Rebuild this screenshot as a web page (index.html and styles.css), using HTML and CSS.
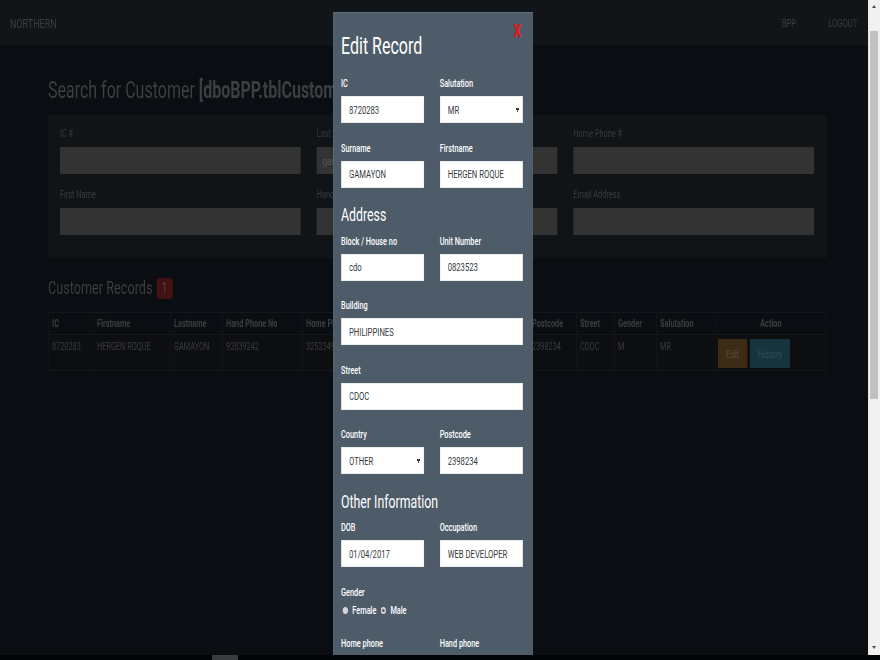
FILE: index.html
```html
<!DOCTYPE html>
<html lang="en">
<head>
<meta charset="utf-8">
<title>Northern - Customers</title>
<link rel="stylesheet" href="styles.css">
</head>
<body>
<div class="screen">
  <div class="page">
    <nav class="navbar">
      <span class="brand">NORTHERN</span>
      <ul class="nav-links">
        <li>BPP</li>
        <li>LOGOUT</li>
      </ul>
    </nav>

    <main class="container">
      <h1 class="page-title">Search for Customer <b>[dboBPP.tblCustomer]</b></h1>

      <section class="search-panel">
        <div class="sfield"><label>IC #</label><input class="sinput" type="text"></div>
        <div class="sfield"><label>Last Name</label><input class="sinput" type="text" value="gamayon"></div>
        <div class="sfield"><label>Home Phone #</label><input class="sinput" type="text"></div>
        <div class="sfield"><label>First Name</label><input class="sinput" type="text"></div>
        <div class="sfield"><label>Hand Phone #</label><input class="sinput" type="text"></div>
        <div class="sfield"><label>Email Address</label><input class="sinput" type="text"></div>
      </section>

      <h2 class="records-title">Customer Records <span class="badge">1</span></h2>

      <table class="records">
        <colgroup>
          <col class="c-ic"><col class="c-first"><col class="c-last"><col class="c-hand">
          <col class="c-home"><col class="c-block"><col class="c-unit"><col class="c-post">
          <col class="c-street"><col class="c-gender"><col class="c-sal"><col class="c-action">
        </colgroup>
        <thead>
          <tr>
            <th>IC</th><th>Firstname</th><th>Lastname</th><th>Hand Phone No</th>
            <th>Home Phone No</th><th>Block</th><th>Unit Number</th><th>Postcode</th>
            <th>Street</th><th>Gender</th><th>Salutation</th><th class="center">Action</th>
          </tr>
        </thead>
        <tbody>
          <tr>
            <td>8720283</td><td>HERGEN ROQUE</td><td>GAMAYON</td><td>92839242</td>
            <td>32523498</td><td>cdo</td><td>0823523</td><td>2398234</td>
            <td>CDOC</td><td>M</td><td>MR</td>
            <td class="action"><button class="btn btn-edit">Edit</button><button class="btn btn-history">History</button></td>
          </tr>
        </tbody>
      </table>
    </main>
  </div>

  <div class="backdrop">
    <div class="modal">
      <button class="close">X</button>
      <h3 class="modal-title">Edit Record</h3>

      <div class="row">
        <div class="field"><label>IC</label><input type="text" value="8720283"></div>
        <div class="field"><label>Salutation</label><select><option>MR</option><option>MS</option></select></div>
      </div>
      <div class="row">
        <div class="field"><label>Surname</label><input type="text" value="GAMAYON"></div>
        <div class="field"><label>Firstname</label><input type="text" value="HERGEN ROQUE"></div>
      </div>

      <h4 class="section">Address</h4>
      <div class="row">
        <div class="field"><label>Block / House no</label><input type="text" value="cdo"></div>
        <div class="field"><label>Unit Number</label><input type="text" value="0823523"></div>
      </div>
      <div class="field"><label>Building</label><input type="text" value="PHILIPPINES"></div>
      <div class="field"><label>Street</label><input type="text" value="CDOC"></div>
      <div class="row">
        <div class="field"><label>Country</label><select><option>OTHER</option></select></div>
        <div class="field"><label>Postcode</label><input type="text" value="2398234"></div>
      </div>

      <h4 class="section">Other Information</h4>
      <div class="row">
        <div class="field"><label>DOB</label><input type="text" value="01/04/2017"></div>
        <div class="field"><label>Occupation</label><input type="text" value="WEB DEVELOPER"></div>
      </div>

      <div class="gender">
        <span class="glabel">Gender</span>
        <div class="radios">
          <input class="radio" type="radio" name="g"><span>Female</span>
          <input class="radio" type="radio" name="g" checked><span>Male</span>
        </div>
      </div>

      <div class="row">
        <div class="field"><label>Home phone</label><input type="text" value="32523498"></div>
        <div class="field"><label>Hand phone</label><input type="text" value="92839242"></div>
      </div>
      <div class="field"><label>Email</label><input type="text" value=""></div>
    </div>
  </div>

  <div class="vscroll">
    <span class="arrow arrow-up"></span>
    <div class="vtrack"><span class="vthumb"></span></div>
    <span class="arrow arrow-down"></span>
  </div>
  <div class="hscroll"><span class="hthumb"></span></div>
</div>
</body>
</html>
```

FILE: styles.css
```css
* { box-sizing: border-box; }

html, body {
  margin: 0;
  height: 100%;
  overflow: hidden;
  background: #0a0d11;
}

body {
  color: #3a3d41;
  font-family: Roboto, "Liberation Sans", Arial, sans-serif;
  font-size: 11px;
}

/* The captured window was 1320px wide, shown squeezed to 880px. */
.screen {
  position: relative;
  width: 1320px;
  height: 660px;
  overflow: hidden;
  transform: scaleX(0.6667);
  transform-origin: 0 0;
}

.page { width: 1302px; }

/* ---------- navbar ---------- */
.navbar {
  height: 46px;
  background: #121518;
  display: flex;
  align-items: center;
  justify-content: space-between;
  padding: 0 16px 0 15px;
}
.brand { font-size: 13.5px; color: #3a3d40; }
.nav-links {
  display: flex;
  gap: 48px;
  list-style: none;
  margin: 0;
  padding: 0;
  font-size: 11.5px;
  color: #3a3d40;
}

/* ---------- page ---------- */
.container {
  width: 1168px;
  margin-left: 72px;
}
.page-title {
  margin: 31px 0 12px;
  font-size: 24px;
  line-height: 26px;
  font-weight: 400;
  color: #3b3e42;
  white-space: nowrap;
}
.page-title b { font-weight: 700; }

.search-panel {
  background: #111417;
  padding: 12px 19px 9px 18px;
  display: grid;
  grid-template-columns: repeat(3, 1fr);
  column-gap: 24px;
}
.sfield { margin-bottom: 14px; }
.sfield label {
  display: block;
  line-height: 14px;
  margin-bottom: 6px;
  font-size: 11px;
  color: #393c3f;
}
.sinput {
  display: block;
  width: 100%;
  height: 27px;
  border: 0;
  background: #333333;
  color: #58585a;
  font: inherit;
  font-size: 11.5px;
  padding: 0 9px;
}

.records-title {
  margin: 19px 0 13px;
  font-size: 19px;
  line-height: 22px;
  font-weight: 400;
  color: #3a3d41;
  display: flex;
  align-items: center;
  gap: 6px;
}
.badge {
  display: inline-block;
  width: 24px;
  height: 21px;
  line-height: 21px;
  text-align: center;
  background: #3f1314;
  color: #6b3a3b;
  font-size: 15px;
  border-radius: 3px;
}

.records {
  width: 1167px;
  table-layout: fixed;
  border-collapse: collapse;
  font-size: 11px;
}
.c-ic { width: 67.5px; }
.c-first { width: 115.5px; }
.c-last { width: 78px; }
.c-hand { width: 120px; }
.c-home { width: 117px; }
.c-block { width: 105px; }
.c-unit { width: 117px; }
.c-post { width: 72px; }
.c-street { width: 57px; }
.c-gender { width: 63px; }
.c-sal { width: 88.5px; }
.c-action { width: 166.5px; }

.records th {
  height: 22px;
  padding: 0 5px;
  text-align: left;
  font-weight: 700;
  color: #3b3e42;
  border: 1px solid #14171b;
  white-space: nowrap;
  overflow: hidden;
}
.records th.center { text-align: center; }
.records td {
  height: 36px;
  padding: 5px 5px 0;
  vertical-align: top;
  color: #3a3c3f;
  background: #0d0e10;
  border: 1px solid #14171b;
  white-space: nowrap;
  overflow: hidden;
}
.records td.action { padding: 4px 3px 2px; }

.btn {
  height: 29px;
  border: 0;
  padding: 0;
  font: inherit;
  font-size: 11.5px;
  vertical-align: top;
}
.btn-edit { width: 44px; background: #3d2c15; color: #5d4b33; }
.btn-history { width: 60px; margin-left: 4.5px; background: #17343e; color: #2e4d59; }

/* ---------- modal ---------- */
.backdrop {
  position: absolute;
  top: 0;
  left: 0;
  right: 22px;
  bottom: 5px;
  overflow: hidden;
}

.modal {
  position: relative;
  width: 299px;
  margin: 12px auto 40px;
  background: #4e5b69;
  border: 1px solid #5d6a78;
  border-left-color: #687684;
  padding: 20px 14px 30px 11px;
  color: #ffffff;
}
.close {
  position: absolute;
  top: 9px;
  right: 16px;
  border: 0;
  background: transparent;
  padding: 0;
  color: #ee1111;
  font: inherit;
  font-size: 18px;
  line-height: 18px;
  font-weight: 700;
}
.modal-title {
  margin: 0 0 18px;
  font-size: 24px;
  line-height: 26px;
  font-weight: 400;
}
.section {
  margin: 0 0 10.5px;
  font-size: 18.5px;
  line-height: 18px;
  font-weight: 400;
}
.row {
  display: grid;
  grid-template-columns: 1fr 1fr;
  column-gap: 24px;
}
.field { margin-bottom: 18.5px; }
.field label, .glabel {
  display: block;
  font-size: 11px;
  line-height: 14px;
  margin-bottom: 5px;
  font-weight: 500;
  color: #ffffff;
}
.field input, .field select {
  display: block;
  width: 100%;
  height: 27px;
  border: 1px solid #eeeeee;
  background: #ffffff;
  color: #333a40;
  font: inherit;
  font-size: 11.5px;
  padding: 0 11px;
  border-radius: 0;
}
.field select {
  appearance: none;
  -webkit-appearance: none;
  background-image:
    linear-gradient(to top right, transparent 50%, #222 50%),
    linear-gradient(to top left, transparent 50%, #222 50%);
  background-repeat: no-repeat;
  background-size: 3px 4px;
  background-position: calc(100% - 7px) 50%, calc(100% - 4px) 50%;
}

.gender { margin-bottom: 20px; }
.gender .glabel { margin-bottom: 3.5px; }
.radios {
  display: flex;
  align-items: center;
  height: 14px;
  font-size: 11px;
  font-weight: 500;
}
.radio {
  -webkit-appearance: none;
  appearance: none;
  width: 8px;
  height: 7px;
  margin: 0 7px 0 2px;
  border-radius: 50%;
  background: #d6d6d6;
}
.radio:checked {
  background: #4e5b69;
  box-shadow: inset 0 0 0 2px #d6d6d6;
}
.radios span + .radio { margin-left: 6px; }

/* ---------- window scrollbars ---------- */
.vscroll {
  position: absolute;
  top: 0;
  right: 0;
  bottom: 5px;
  width: 18px;
  background: #f1f1f1;
  display: flex;
  flex-direction: column;
  align-items: center;
}
.vtrack {
  flex: 1;
  width: 100%;
  padding: 23px 3px 0;
}
.vthumb {
  display: block;
  height: 368px;
  background: #c1c1c1;
}
.arrow {
  flex: none;
  width: 0;
  height: 0;
  border-left: 3px solid transparent;
  border-right: 3px solid transparent;
}
.arrow-up { margin-top: 5px; border-bottom: 3px solid #505050; }
.arrow-down { margin: 0 0 6px; border-top: 3px solid #505050; }

.hscroll {
  position: absolute;
  left: 0;
  right: 0;
  bottom: 0;
  height: 5px;
  background: #030405;
}
.hthumb {
  position: absolute;
  left: 318px;
  top: 0;
  width: 39px;
  height: 5px;
  background: #3a3b3d;
}
```
